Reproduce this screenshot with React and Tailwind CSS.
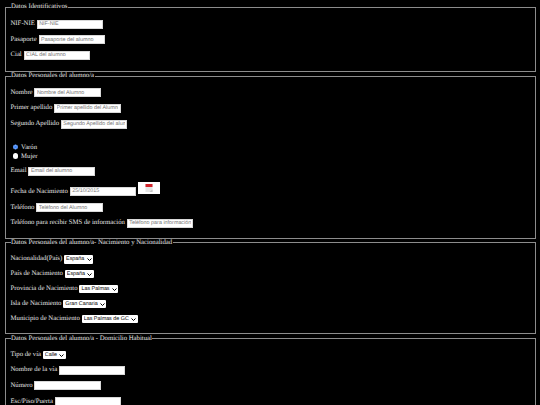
import React from 'react';

const sans = 'font-["Liberation_Sans",sans-serif] [text-rendering:geometricPrecision]';
const inputCls = `bg-white border border-[#d8d8d8] h-[9px] px-[1.5px] text-[5.4px] leading-none placeholder:text-[#757575] outline-none shrink-0 ${sans}`;

function Field({ label, placeholder, value, width = 'w-[66.5px]' }) {
  return (
    <div className="h-[15.6px] flex items-center gap-[1.8px]">
      <label className="whitespace-nowrap">{label}</label>
      <input className={`${inputCls} ${width} text-black`} placeholder={placeholder} defaultValue={value} />
    </div>
  );
}

function Choice({ label, option }) {
  return (
    <div className="h-[14.9px] flex items-center gap-[1.8px]">
      <label className="whitespace-nowrap">{label}</label>
      <span className="relative inline-flex shrink-0">
        <select className={`appearance-none bg-white text-black h-[8.5px] py-0 pl-[2px] pr-[8px] text-[5.4px] leading-[8.5px] rounded-[1px] ${sans}`} defaultValue={option}>
          <option>{option}</option>
        </select>
        <svg className="absolute right-[1.5px] top-[3px] pointer-events-none" width="5" height="3" viewBox="0 0 5 3">
          <path d="M0.5 0.5 L2.5 2.5 L4.5 0.5" fill="none" stroke="#000" strokeWidth="1" />
        </svg>
      </span>
    </div>
  );
}

function Group({ title, className, children }) {
  return (
    <fieldset className={`border border-[#8c8c8c] mx-[4.5px] px-[5px] pt-[5px] ${className}`}>
      <legend className="px-[0.5px] leading-[8px]">{title}</legend>
      {children}
    </fieldset>
  );
}

function CalendarIcon() {
  return (
    <svg width="10" height="10" viewBox="0 0 10 10">
      <rect x="1.5" y="1" width="7" height="8" fill="#e6e6e6" />
      <rect x="1.5" y="1" width="7" height="3" fill="#d2232a" />
      <path d="M5.5 9 L8.5 6.5 V9 Z" fill="#c4c4c4" />
    </svg>
  );
}

export default function App() {
  return (
    <div className='w-[540px] h-[405px] overflow-hidden bg-black text-[#e4e4e4] text-[6.75px] font-["Liberation_Serif",serif] [text-rendering:geometricPrecision] pt-[3.3px]'>
      <Group title="Datos Identificativos" className="h-[68.5px]">
        <Field label="NIF-NIE" placeholder="NIF-NIE" />
        <Field label="Pasaporte" placeholder="Pasaporte del alumno" />
        <Field label="Cial" placeholder="CIAL del alumno" />
      </Group>

      <Group title="Datos Personales del alumno/a" className="h-[166.5px] mt-[0.3px]">
        <Field label="Nombre" placeholder="Nombre del Alumno" />
        <Field label="Primer apellido" placeholder="Primer apellido del Alumno" />
        <Field label="Segundo Apellido" placeholder="Segundo Apellido del alumno" />
        <div className="mt-[10.7px] pl-[2px] leading-[9px]">
          <div className="flex items-center gap-[3px]">
            <input type="radio" name="sexo" defaultChecked className="w-[5.5px] h-[5.5px] accent-[#3b82f6]" />
            <span>Varón</span>
          </div>
          <div className="flex items-center gap-[3px]">
            <input type="radio" name="sexo" className="w-[5.5px] h-[5.5px] appearance-none bg-white rounded-full" />
            <span>Mujer</span>
          </div>
        </div>
        <div className="mt-[2.7px]">
          <Field label="Email" placeholder="Email del alumno" />
        </div>
        <div className="h-[21px] flex items-end gap-[1.8px] pb-[4px]">
          <label className="whitespace-nowrap leading-[9px]">Fecha de Nacimiento</label>
          <input className={`${inputCls} w-[66.5px] text-[#757575]`} defaultValue="25/10/2015" />
          <button className="w-[21.5px] h-[11.5px] mb-[2px] ml-[0.5px] bg-white flex items-center justify-center shrink-0 overflow-hidden">
            <CalendarIcon />
          </button>
        </div>
        <Field label="Teléfono" placeholder="Teléfono del Alumno" />
        <Field label="Teléfono para recibir SMS de información" placeholder="Teléfono para información" />
      </Group>

      <Group title="Datos Personales del alumno/a- Nacimiento y Nacionalidad" className="h-[95.5px] mt-[0.3px]">
        <Choice label="Nacionalidad(País)" option="España" />
        <Choice label="País de Nacimiento" option="España" />
        <Choice label="Provincia de Nacimiento" option="Las Palmas" />
        <Choice label="Isla de Nacimiento" option="Gran Canaria" />
        <Choice label="Municipio de Nacimiento" option="Las Palmas de GC" />
      </Group>

      <Group title="Datos Personales del alumno/a - Domicilio Habitual" className="h-[90px] mt-[0.3px]">
        <Choice label="Tipo de vía" option="Calle" />
        <Field label="Nombre de la vía" />
        <Field label="Número" />
        <Field label="Esc/Piso/Puerta" />
      </Group>
    </div>
  );
}
